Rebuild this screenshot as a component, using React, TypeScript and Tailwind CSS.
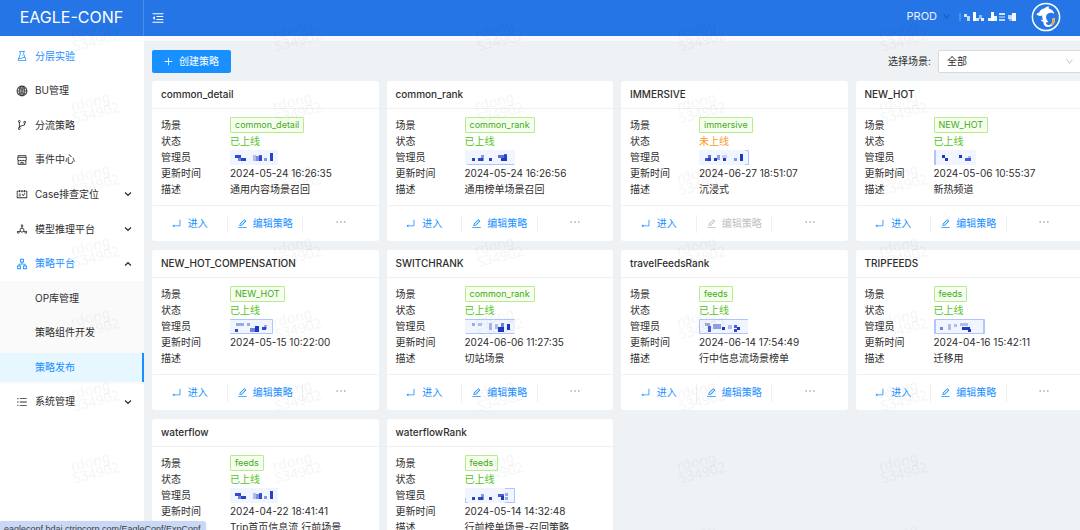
import React from "react";
import {
  AiOutlineApartment,
  AiOutlineBranches,
  AiOutlineDeploymentUnit,
  AiOutlineDown,
  AiOutlineEdit,
  AiOutlineEllipsis,
  AiOutlineEnter,
  AiOutlineExperiment,
  AiOutlineGlobal,
  AiOutlineMenuFold,
  AiOutlinePlus,
  AiOutlineSchedule,
  AiOutlineShop,
  AiOutlineUnorderedList,
} from "react-icons/ai";
import type { IconType } from "react-icons";

type Block = [x: number, y: number, w: number, h: number, alpha: number];

interface Mosaic {
  width: number;
  frame: string;
  blocks: Block[];
}

interface Strategy {
  name: string;
  scene: string;
  online: boolean;
  owner: Mosaic;
  updated: string;
  note: string;
}

const detailOwner: Mosaic = {
  width: 48,
  frame: "",
  blocks: [[5, 5, 6, 3, 0.9], [8, 8, 3, 3, 0.6], [11, 8, 5, 3, 0.95], [23, 5, 3, 6, 0.3], [26, 6, 6, 5, 0.55], [29, 5, 3, 6, 0.8], [34, 8, 3, 3, 0.5], [40, 3, 3, 8, 0.95]],
};

const strategies: Strategy[] = [
  { name: "common_detail", scene: "common_detail", online: true, updated: "2024-05-24 16:26:35", note: "通用内容场景召回", owner: detailOwner },
  {
    name: "common_rank", scene: "common_rank", online: true, updated: "2024-05-24 16:26:56", note: "通用榜单场景召回",
    owner: { width: 50, frame: "M2 14.5H49", blocks: [[7, 8, 3, 3, 0.95], [13, 8, 5, 3, 0.9], [16, 5, 3, 6, 0.5], [24, 8, 3, 3, 0.95], [33, 5, 9, 3, 0.7], [36, 8, 6, 3, 1], [39, 4, 3, 7, 0.8]] },
  },
  {
    name: "IMMERSIVE", scene: "immersive", online: false, updated: "2024-06-27 18:51:07", note: "沉浸式",
    owner: { width: 50, frame: "M46 .5H49.5V14.5H46", blocks: [[6, 8, 6, 3, 0.85], [9, 5, 3, 6, 0.7], [15, 8, 3, 3, 1], [18, 5, 3, 5, 0.45], [23, 5, 5, 3, 0.2], [24, 8, 3, 3, 1], [35, 8, 3, 3, 0.5], [41, 4, 3, 7, 1]] },
  },
  {
    name: "NEW_HOT", scene: "NEW_HOT", online: true, updated: "2024-05-06 10:55:37", note: "新热频道",
    owner: { width: 42, frame: "M.5 0V15M1.5 0V15", blocks: [[8, 5, 3, 3, 1], [11, 8, 3, 3, 1], [25, 5, 3, 3, 1], [31, 8, 6, 3, 0.8], [34, 6, 3, 3, 0.3]] },
  },
  {
    name: "NEW_HOT_COMPENSATION", scene: "NEW_HOT", online: true, updated: "2024-05-15 10:22:00", note: "",
    owner: { width: 43, frame: "M0 .5H42.5V14.5H0", blocks: [[6, 4, 8, 3, 0.4], [5, 10, 3, 3, 0.9], [17, 4, 3, 3, 0.4], [20, 9, 5, 4, 0.6], [25, 7, 4, 6, 1], [32, 8, 4, 3, 0.9], [34, 6, 3, 4, 0.4]] },
  },
  {
    name: "SWITCHRANK", scene: "common_rank", online: true, updated: "2024-06-06 11:27:35", note: "切站场景",
    owner: { width: 50, frame: "M0 .5H49.5M1 14.5H49.5", blocks: [[7, 4, 3, 3, 0.4], [13, 4, 4, 3, 0.3], [24, 4, 3, 7, 0.35], [30, 5, 3, 5, 0.3], [33, 8, 6, 5, 1], [36, 4, 3, 4, 0.6], [42, 5, 3, 6, 1]] },
  },
  {
    name: "travelFeedsRank", scene: "feeds", online: true, updated: "2024-06-14 17:54:49", note: "行中信息流场景榜单",
    owner: { width: 49, frame: "M49 .5H.5V14.5H49", blocks: [[6, 4, 5, 3, 0.4], [9, 7, 3, 6, 0.8], [14, 5, 8, 5, 0.45], [23, 8, 3, 3, 1], [29, 6, 4, 4, 0.3], [35, 6, 3, 3, 0.8], [38, 8, 3, 3, 1], [35, 10, 3, 3, 0.9]] },
  },
  {
    name: "TRIPFEEDS", scene: "feeds", online: true, updated: "2024-04-16 15:42:11", note: "迁移用",
    owner: { width: 51, frame: "M.5 .5H50.5V14.5H.5ZM1.5 0V15M49.5 0V15", blocks: [[6, 8, 3, 3, 0.6], [14, 5, 3, 6, 0.3], [20, 5, 3, 3, 0.3], [26, 4, 8, 3, 0.3], [28, 8, 8, 3, 1], [34, 10, 3, 3, 1]] },
  },
  { name: "waterflow", scene: "feeds", online: true, updated: "2024-04-22 18:41:41", note: "Trip首页信息流 行前场景", owner: detailOwner },
  {
    name: "waterflowRank", scene: "feeds", online: true, updated: "2024-05-14 14:32:48", note: "行前榜单场景-召回策略",
    owner: { width: 50, frame: "M40 .5H49.5V14.5H40M3 14.5H.5V10", blocks: [[7, 9, 3, 3, 0.95], [13, 9, 5, 3, 0.9], [16, 6, 3, 6, 0.5], [24, 9, 3, 3, 0.95], [33, 6, 6, 3, 0.8], [36, 8, 3, 4, 1], [40, 5, 3, 3, 0.4], [40, 9, 3, 3, 0.4]] },
  },
];

function OwnerMosaic({ owner }: { owner: Mosaic }) {
  return (
    <svg width={owner.width} height="15" viewBox={`0 0 ${owner.width} 15`} aria-hidden="true" className="block">
      <rect width={owner.width} height="15" fill="#f0f5ff" />
      <path d={owner.frame} fill="none" stroke="#adc6ff" />
      {owner.blocks.map(([x, y, w, h, alpha], i) => (
        <rect key={i} x={x} y={y} width={w} height={h} fill="#1d39c4" fillOpacity={alpha} />
      ))}
    </svg>
  );
}

function Row({ label, children }: { label: string; children: React.ReactNode }) {
  return (
    <div className="flex h-4 items-center">
      <dt className="w-[69px] shrink-0">{label}</dt>
      <dd className="whitespace-nowrap">{children}</dd>
    </div>
  );
}

function StrategyCard({ item }: { item: Strategy }) {
  return (
    <article className="overflow-hidden rounded-[3px] bg-white">
      <h2 className="flex h-7 items-center border-b border-[#f0f0f0] px-[9px] font-medium">{item.name}</h2>
      <dl className="px-[9px] py-2 leading-4">
        <Row label="场景">
          <span className="flex h-4 items-center rounded-[1px] border border-[#b7eb8f] bg-[#f6ffed] px-1 text-[9px] text-[#43a91c]">
            {item.scene}
          </span>
        </Row>
        <Row label="状态">
          <span className={item.online ? "text-[#52c41a]" : "text-[#fa9a2c]"}>{item.online ? "已上线" : "未上线"}</span>
        </Row>
        <Row label="管理员">
          <OwnerMosaic owner={item.owner} />
        </Row>
        <Row label="更新时间">{item.updated}</Row>
        <Row label="描述">{item.note}</Row>
      </dl>
      <div className="grid h-9 grid-cols-3 items-center rounded-t-[3px] border-t border-[#f0f0f0] text-[#1890ff]">
        <button type="button" className="flex h-[18px] items-center justify-center gap-[6px] border-r border-[#f0f0f0]">
          <AiOutlineEnter size={11} />
          进入
        </button>
        <button
          type="button"
          disabled={!item.online}
          className="flex h-[18px] items-center justify-center gap-[5px] border-r border-[#f0f0f0] disabled:text-[#bfbfbf]"
        >
          <AiOutlineEdit size={11} />
          编辑策略
        </button>
        <button type="button" aria-label="更多" className="flex h-[18px] items-start justify-center text-[#8c8c8c]">
          <AiOutlineEllipsis size={14} />
        </button>
      </div>
    </article>
  );
}

function MenuArrow({ open }: { open: boolean }) {
  return (
    <svg width="8" height="6" viewBox="0 0 8 6" aria-hidden="true" className="ml-auto" fill="none" stroke="#333" strokeWidth="1.3">
      <path d={open ? "M1 4.5L4 1.7L7 4.5" : "M1 1.5L4 4.3L7 1.5"} />
    </svg>
  );
}

interface MenuEntry {
  label: string;
  icon: IconType;
  heavy?: boolean;
  active?: boolean;
  open?: boolean;
  children?: { label: string; active?: boolean }[];
}

const menu: MenuEntry[] = [
  { label: "分层实验", icon: AiOutlineExperiment, active: true },
  { label: "BU管理", icon: AiOutlineGlobal, heavy: true },
  { label: "分流策略", icon: AiOutlineBranches },
  { label: "事件中心", icon: AiOutlineShop },
  { label: "Case排查定位", icon: AiOutlineSchedule, open: false },
  { label: "模型推理平台", icon: AiOutlineDeploymentUnit, open: false },
  {
    label: "策略平台",
    icon: AiOutlineApartment,
    active: true,
    open: true,
    children: [{ label: "OP库管理" }, { label: "策略组件开发" }, { label: "策略发布", active: true }],
  },
  { label: "系统管理", icon: AiOutlineUnorderedList, open: false },
];

function Sidebar() {
  return (
    <nav className="w-36 shrink-0 bg-white pt-[3px]">
      <ul className="flex h-[380px] flex-col">
        {menu.map((entry) => {
          const Icon = entry.icon;
          return (
            <React.Fragment key={entry.label}>
              <li className="min-h-0 flex-1">
                <a
                  href="#"
                  className={`flex h-full items-center gap-[7px] pl-4 pr-3 ${entry.active ? "text-[#1890ff]" : ""}`}
                >
                  <Icon size={12} className={entry.heavy ? "[stroke-width:20]" : undefined} />
                  {entry.label}
                  {entry.open !== undefined && <MenuArrow open={entry.open} />}
                </a>
              </li>
              {entry.children && (
                <li className="min-h-0 flex-[3] bg-[#fafafa]">
                  <ul className="flex h-full flex-col">
                    {entry.children.map((child) => (
                      <li key={child.label} className="flex flex-1 items-center">
                        <a
                          href="#"
                          className={`flex h-[29px] w-full items-center pl-[35px] ${
                            child.active ? "border-r-2 border-[#1890ff] bg-[#e6f7ff] text-[#1890ff]" : ""
                          }`}
                        >
                          {child.label}
                        </a>
                      </li>
                    ))}
                  </ul>
                </li>
              )}
            </React.Fragment>
          );
        })}
      </ul>
    </nav>
  );
}

const userBlocks: Block[] = [
  [0, 2, 2, 8, 0.2], [5, 3, 3, 3, 0.8], [8, 5, 3, 5, 0.7], [14, 1, 3, 9, 1], [17, 7, 3, 3, 0.8], [20, 4, 3, 4, 0.5], [22, 7, 3, 3, 0.9],
  [29, 7, 3, 3, 0.9], [32, 1, 3, 9, 1], [35, 5, 3, 5, 0.9], [40, 2, 6, 2, 0.8], [40, 5, 6, 2, 0.4], [40, 8, 6, 2, 0.7], [49, 4, 4, 4, 0.7], [53, 2, 4, 8, 0.95], [50, 7, 4, 3, 0.4],
];

function Avatar() {
  return (
    <svg width="30" height="30" viewBox="0 0 30 30" role="img" aria-label="用户头像">
      <circle cx="15" cy="15" r="13.6" fill="#2577e3" stroke="#fff" strokeWidth="1.5" />
      <path
        d="M5.4 12.6C5.800 11.300 6.800 10.600 8.100 10.400C9.300 8 11.300 6.600 13.800 6.200C14.800 5 16.500 4.300 18.400 4.600C17.700 5.300 17.500 5.900 17.700 6.500C20.800 7.200 22.900 9.300 23.200 12C21.800 10.800 20 10.400 18.200 11.100C15.200 12.300 14.300 14.700 15.500 17.200C16.200 18.600 17.100 19.300 17.300 20.600C16.200 20.200 15.500 20.300 14.900 20.800C15.200 22.600 16.600 23.300 18.300 22.900C21 22.200 22 20 21.200 16.800L23.800 15.800C24.600 20.500 22 24.500 17.800 24.900C14.400 25.200 12.200 22.900 12.500 19.900C10.900 19.300 10 18.500 9.700 17.400C10.800 17.900 11.500 18 12 17.900C11.200 16.300 11 14.900 11.200 13.500C9.200 14.200 7.200 14 5.400 12.600Z"
        fill="#fff"
      />
      <path d="M21.200 16.800L23.800 15.800C24.300 18.800 23.400 21.500 21.500 23.200L19.300 22.500C21.200 21.600 21.900 19.500 21.200 16.800Z" fill="#f7a23b" />
    </svg>
  );
}

function Header() {
  return (
    <header className="flex h-9 shrink-0 items-center bg-[#2575e6] text-white">
      <h1 className="flex h-full w-36 shrink-0 items-center justify-center border-r border-[#4a8dea] pb-[3px] text-base">
        EAGLE-CONF
      </h1>
      <button type="button" aria-label="收起菜单" className="ml-[7px]">
        <AiOutlineMenuFold size={14} />
      </button>
      <div className="ml-auto flex items-center pb-[3px] pr-[19px]">
        <button type="button" className="flex items-center gap-[5px] text-[11px] text-white/90">
          PROD
          <AiOutlineDown size={9} className="text-[#174f9e]" />
        </button>
        <svg width="58" height="11" viewBox="0 0 58 11" aria-hidden="true" className="ml-2 mr-3.5">
          {userBlocks.map(([x, y, w, h, alpha], i) => (
            <rect key={i} x={x} y={y} width={w} height={h} fill="#fff" fillOpacity={alpha} />
          ))}
        </svg>
        <Avatar />
      </div>
    </header>
  );
}

function Watermark() {
  return (
    <svg aria-hidden="true" className="pointer-events-none absolute inset-0 h-full w-full font-['Noto_Sans',sans-serif]">
      <defs>
        <pattern id="watermark" width="202" height="72" patternUnits="userSpaceOnUse">
          <g transform="translate(94 36) rotate(-14)" fill="#000" fillOpacity="0.04" fontSize="14" textAnchor="middle">
            <text x="-2" y="-2">rdong</text>
            <text x="1" y="10">S34902</text>
          </g>
        </pattern>
      </defs>
      <rect width="100%" height="100%" fill="url(#watermark)" />
    </svg>
  );
}

export default function App() {
  return (
    <div className="relative flex h-screen flex-col overflow-hidden bg-[#eff2f5] font-['Inter','Noto_Sans_CJK_SC',sans-serif] text-[10px] text-[#2e2e2e]">
      <Header />
      <div className="flex min-h-0 flex-1">
        <Sidebar />
        <main className="min-w-0 flex-1 overflow-x-hidden overflow-y-auto [scrollbar-width:none]">
          <div className="h-[5px] bg-[#fafafa]" />
          <div className="-mr-0.5 pl-2 pt-[9px]">
            <div className="mb-2 flex items-center justify-between">
              <button type="button" className="flex h-[23px] items-center gap-[5px] rounded-[2px] bg-[#1890ff] pl-[11px] pr-3 text-white">
                <AiOutlinePlus size={11} />
                创建策略
              </button>
              <div className="flex items-center gap-[7px]">
                <label htmlFor="scene">选择场景:</label>
                <div className="relative">
                  <select
                    id="scene"
                    className="block h-[23px] w-36 appearance-none rounded-[2px] border border-[#d9d9d9] bg-white pl-2 pr-6 outline-none"
                  >
                    <option>全部</option>
                  </select>
                  <AiOutlineDown size={9} className="pointer-events-none absolute right-2 top-[7px] text-[#bfbfbf]" />
                </div>
              </div>
            </div>
            <div className="grid grid-cols-4 gap-x-2 gap-y-[9px] pb-2">
              {strategies.map((item) => (
                <StrategyCard key={item.name} item={item} />
              ))}
            </div>
          </div>
        </main>
      </div>
      <Watermark />
      <div className="absolute bottom-0 left-0 h-[9px] overflow-hidden rounded-tr-[3px] bg-[#c9d8f5] pl-1 pr-[5px] pt-0.5 font-['Liberation_Sans',sans-serif] text-[9px] leading-3 text-[#3c4043] shadow">
        eagleconf.bdai.ctripcorp.com/EagleConf/ExpConf
      </div>
    </div>
  );
}
